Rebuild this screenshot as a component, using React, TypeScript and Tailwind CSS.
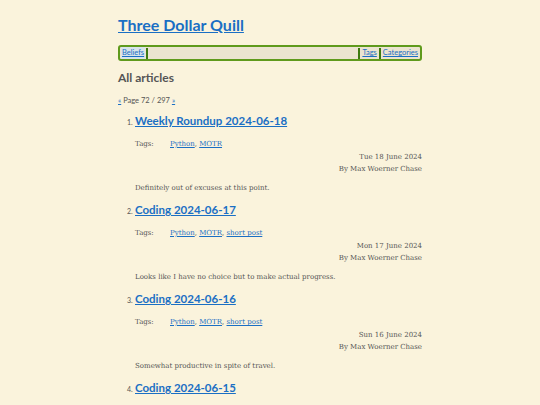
const articles = [
  {
    n: 1,
    title: "Weekly Roundup 2024-06-18",
    tags: ["Python", "MOTR"],
    date: "Tue 18 June 2024",
    summary: "Definitely out of excuses at this point.",
  },
  {
    n: 2,
    title: "Coding 2024-06-17",
    tags: ["Python", "MOTR", "short post"],
    date: "Mon 17 June 2024",
    summary: "Looks like I have no choice but to make actual progress.",
  },
  {
    n: 3,
    title: "Coding 2024-06-16",
    tags: ["Python", "MOTR", "short post"],
    date: "Sun 16 June 2024",
    summary: "Somewhat productive in spite of travel.",
  },
  {
    n: 4,
    title: "Coding 2024-06-15",
    tags: [],
    date: "",
    summary: "",
  },
];

const heading = "font-['Lato',sans-serif]";
const body = "font-['DejaVu_Serif',serif]";

const App = () => {
  return (
    <div className="h-[405px] bg-[#faf3dc] overflow-hidden">
      <div className="w-[304px] mx-auto pt-[14px]">
        {/* Header */}
        <h1 className={`${heading} text-[16px] leading-[22px] font-bold text-[#1a6fc4] underline`}>
          Three Dollar Quill
        </h1>
        <nav
          className={`${heading} mt-[9px] h-[16px] flex items-center border-2 border-[#5f9a1c] rounded-[3px] bg-[#ebe4d0] px-[1px] text-[7.5px]`}
        >
          <a className="text-[#1a6fc4] underline bg-[#d8e4ea] px-[1px]">Beliefs</a>
          <span className="w-[2px] h-[11px] bg-[#3d7a10] ml-[1px]" />
          <span className="flex-1" />
          <span className="w-[2px] h-[11px] bg-[#3d7a10] mr-[1px]" />
          <a className="text-[#1a6fc4] underline px-[1px]">Tags</a>
          <span className="w-[2px] h-[11px] bg-[#3d7a10] mx-[1px]" />
          <a className="text-[#1a6fc4] underline px-[1px]">Categories</a>
        </nav>

        {/* Listing */}
        <h2 className={`${heading} mt-[9px] text-[12px] leading-[16px] font-bold text-[#555]`}>All articles</h2>
        <p className={`${heading} mt-[10px] text-[7.5px] leading-[10px] text-[#555]`}>
          <a className="text-[#1a6fc4] underline">«</a> Page 72 / 297{" "}
          <a className="text-[#1a6fc4] underline">»</a>
        </p>

        <ol className="mt-[6px]">
          {articles.map((a) => (
            <li key={a.n} className="h-[89px] pl-[17px]">
              <div className="flex items-baseline">
                <span className={`${heading} w-[8px] -ml-[8px] text-[7px] text-[#555]`}>{a.n}.</span>
                <a className={`${heading} text-[11.5px] leading-[18px] font-bold text-[#1a6fc4] underline`}>
                  {a.title}
                </a>
              </div>
              {a.tags.length > 0 && (
                <>
                  <div className={`${body} mt-[8px] flex text-[7px] leading-[12px] text-[#555]`}>
                    <span className="w-[35px]">Tags:</span>
                    <span>
                      {a.tags.map((t, i) => (
                        <span key={t}>
                          <a className="text-[#1a6fc4] underline">{t}</a>
                          {i < a.tags.length - 1 ? ", " : ""}
                        </span>
                      ))}
                    </span>
                  </div>
                  <div className={`${body} mt-[1px] text-right text-[7px] leading-[12px] text-[#555]`}>
                    <div>{a.date}</div>
                    <div>By Max Woerner Chase</div>
                  </div>
                  <p className={`${body} mt-[7px] text-[7px] leading-[12px] text-[#555]`}>{a.summary}</p>
                </>
              )}
            </li>
          ))}
        </ol>
      </div>
    </div>
  );
};

export default App;
